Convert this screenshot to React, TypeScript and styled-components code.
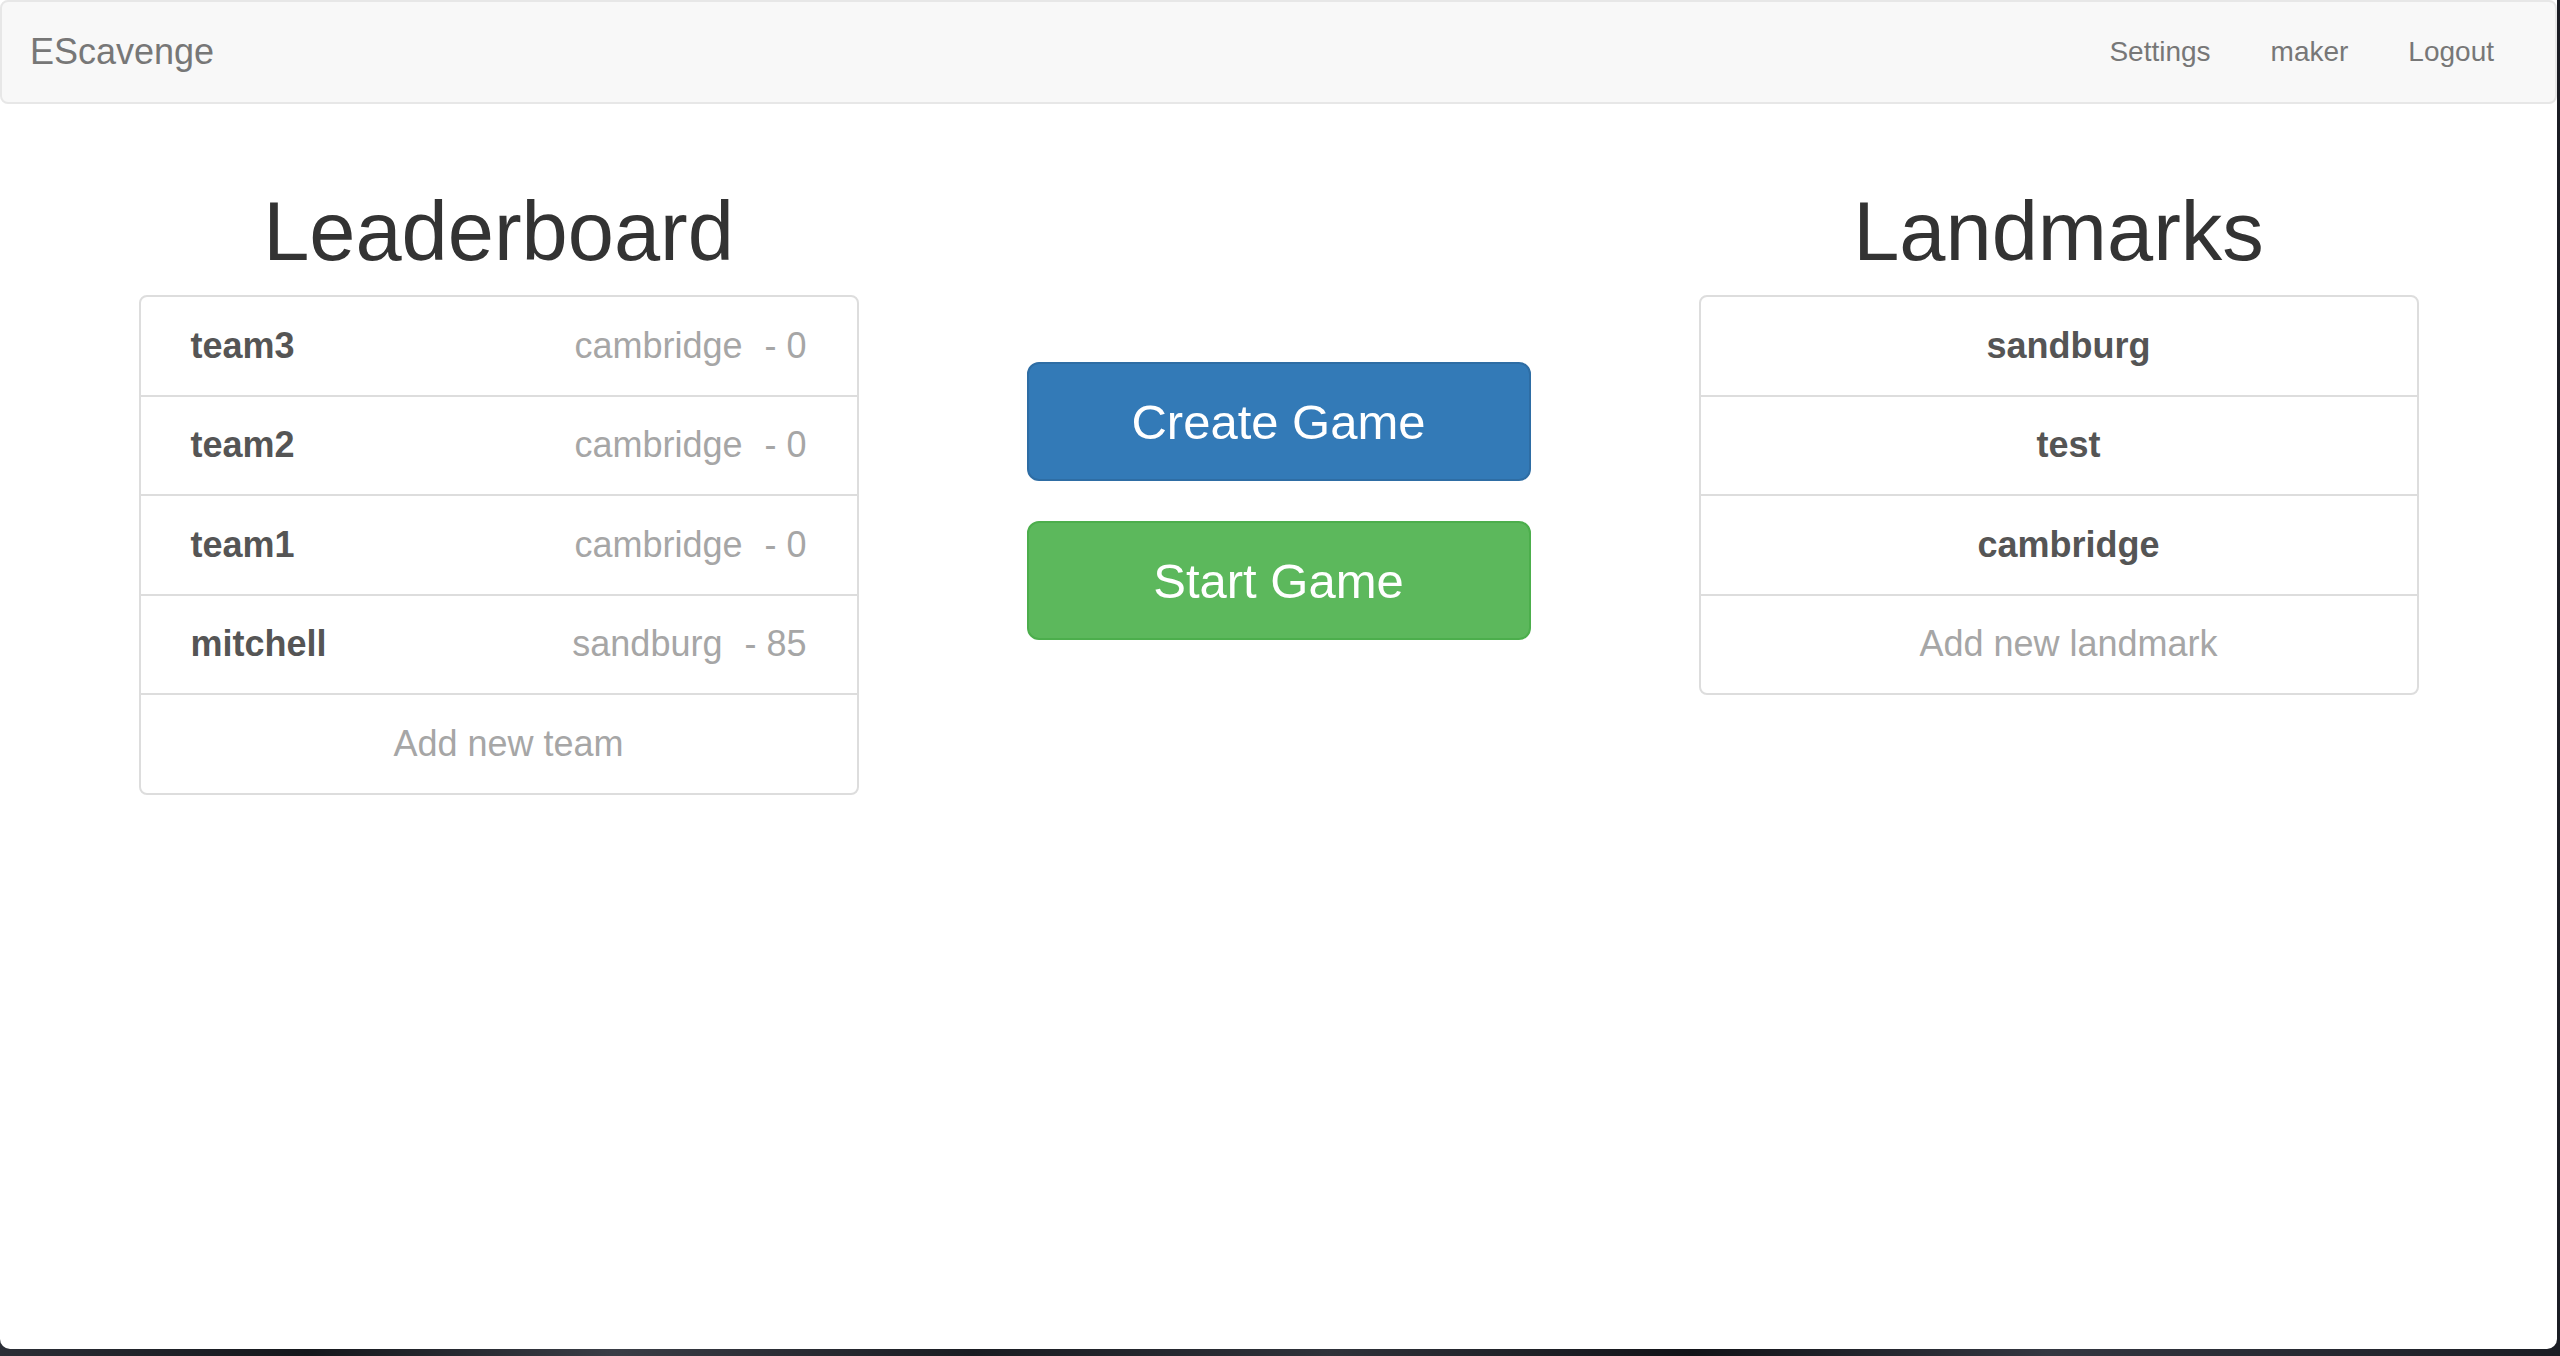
import React from 'react';
import styled, { createGlobalStyle } from 'styled-components';

const GlobalStyle = createGlobalStyle`
  html, body {
    margin: 0;
    padding: 0;
  }
  body {
    background: linear-gradient(
      90deg,
      #2b2e36 0%,
      #15171c 12%,
      #3a3d46 24%,
      #1a1c22 38%,
      #2f323a 52%,
      #121318 66%,
      #343741 80%,
      #1b1d24 100%
    );
    font-family: 'Liberation Sans', Arial, Helvetica, sans-serif;
    color: #333;
  }
  * {
    box-sizing: border-box;
  }
`;

const Window = styled.div`
  width: 2557px;
  height: 1349px;
  background: #ffffff;
  border-radius: 0 0 10px 10px;
  overflow: hidden;
`;

const Navbar = styled.nav`
  display: flex;
  align-items: center;
  justify-content: space-between;
  height: 104px;
  padding: 0 0 0 28px;
  background: #f8f8f8;
  border: 2px solid #e7e7e7;
  border-radius: 8px;
`;

const Brand = styled.a`
  font-size: 36px;
  line-height: 40px;
  color: #777;
  text-decoration: none;
`;

const NavLinks = styled.ul`
  display: flex;
  margin: 0;
  padding: 0 31px 0 0;
  list-style: none;
`;

const NavLink = styled.li`
  padding: 0 30px;
  font-size: 28px;
  line-height: 40px;
  color: #777;
`;

const Container = styled.main`
  display: grid;
  grid-template-columns: repeat(3, 1fr);
  column-gap: 60px;
  width: 2280px;
  margin: 40px auto 0;
`;

const Column = styled.section<{ $offset?: number }>`
  display: flex;
  flex-direction: column;
  align-items: stretch;
  padding-top: ${(p) => p.$offset ?? 0}px;
`;

const Heading = styled.h1`
  margin: 43px 0 18px;
  font-size: 83px;
  font-weight: 500;
  line-height: 90px;
  text-align: center;
  color: #333;
`;

const ListGroup = styled.div`
  border: 2px solid #ddd;
  border-radius: 8px;
`;

const ListItem = styled.div<{ $centered?: boolean; $muted?: boolean }>`
  box-sizing: content-box;
  display: flex;
  align-items: center;
  justify-content: ${(p) => (p.$centered ? 'center' : 'space-between')};
  height: 97.5px;
  padding: ${(p) => (p.$centered ? '0 40px 0 60px' : '0 50px')};
  font-size: 36px;
  font-weight: ${(p) => (p.$muted ? 'normal' : 'bold')};
  color: ${(p) => (p.$muted ? '#a6a6a6' : '#555')};

  & + & {
    border-top: 2px solid #ddd;
  }
`;

const Meta = styled.span`
  font-weight: normal;
  color: #a6a6a6;
`;

const Location = styled.span`
  margin-right: 22px;
`;

const GameButton = styled.button<{ $variant: 'primary' | 'success' }>`
  align-self: center;
  width: 70%;
  height: 119px;
  margin-bottom: 40px;
  padding: 0;
  font-family: inherit;
  font-size: 49px;
  color: #fff;
  background: ${(p) => (p.$variant === 'primary' ? '#337ab7' : '#5cb85c')};
  border: 2px solid ${(p) => (p.$variant === 'primary' ? '#2e6da4' : '#4cae4c')};
  border-radius: 12px;
  cursor: pointer;
`;

const teams = [
  { name: 'team3', landmark: 'cambridge', score: 0 },
  { name: 'team2', landmark: 'cambridge', score: 0 },
  { name: 'team1', landmark: 'cambridge', score: 0 },
  { name: 'mitchell', landmark: 'sandburg', score: 85 },
];

const landmarks = ['sandburg', 'test', 'cambridge'];

const App: React.FC = () => {
  return (
    <>
      <GlobalStyle />
      <Window>
        <Navbar>
          <Brand>EScavenge</Brand>
          <NavLinks>
            <NavLink>Settings</NavLink>
            <NavLink>maker</NavLink>
            <NavLink>Logout</NavLink>
          </NavLinks>
        </Navbar>
        <Container>
          <Column>
            <Heading>Leaderboard</Heading>
            <ListGroup>
              {teams.map((t) => (
                <ListItem key={t.name}>
                  <span>{t.name}</span>
                  <Meta>
                    <Location>{t.landmark}</Location>- {t.score}
                  </Meta>
                </ListItem>
              ))}
              <ListItem $centered $muted>
                Add new team
              </ListItem>
            </ListGroup>
          </Column>
          <Column $offset={218}>
            <GameButton $variant="primary">Create Game</GameButton>
            <GameButton $variant="success">Start Game</GameButton>
          </Column>
          <Column>
            <Heading>Landmarks</Heading>
            <ListGroup>
              {landmarks.map((l) => (
                <ListItem key={l} $centered>
                  {l}
                </ListItem>
              ))}
              <ListItem $centered $muted>
                Add new landmark
              </ListItem>
            </ListGroup>
          </Column>
        </Container>
      </Window>
    </>
  );
};

export default App;
